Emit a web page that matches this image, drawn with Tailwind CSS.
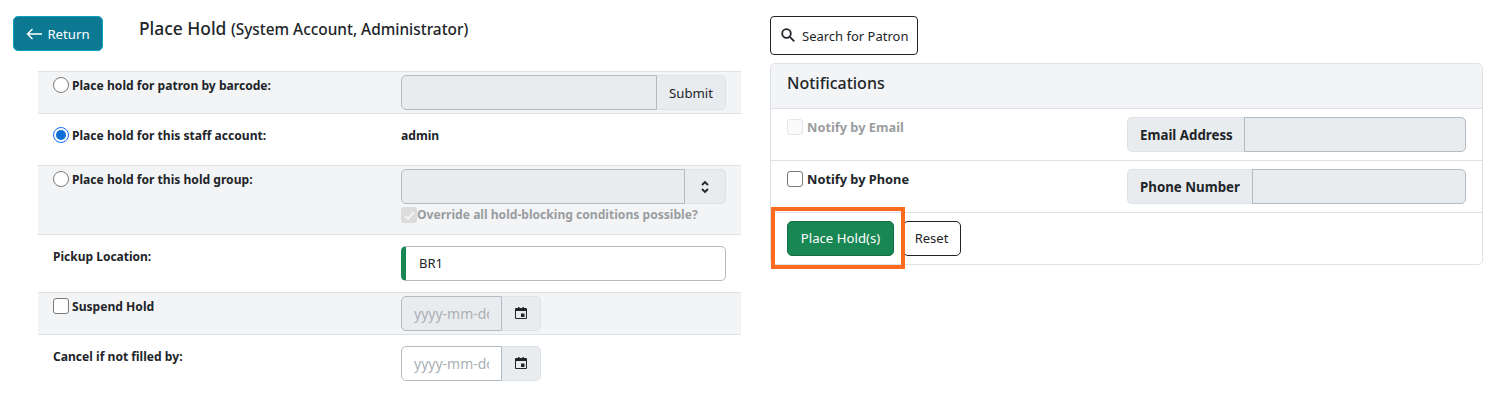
<!DOCTYPE html>
<html lang="en">
  <head>
    <meta charset="UTF-8" />
    <title>Place Hold</title>
    <script src="https://cdn.jsdelivr.net/npm/@tailwindcss/browser@4"></script>
  </head>
  <body class="bg-white h-[409px] overflow-hidden font-['Noto_Sans','Open_Sans',sans-serif] text-[13px] text-[#212529]">
    <div class="flex">
      <!-- left column -->
      <div class="w-[770px] shrink-0">
        <div class="flex pl-[13px] pt-[16px] h-[71px]">
          <a class="w-[90px] h-[35px] pt-[2px] flex items-center justify-center gap-[5px] rounded-[5px] bg-[#0c7891] border border-[#0aa2c0] text-white text-[13.2px]">
            <svg class="w-[16px] h-[16px] -mt-[2px]" viewBox="0 0 16 16" fill="none" stroke="currentColor" stroke-width="1.4"><path d="M16 8H1.500M6.500 3l-5 5 5 5" /></svg>
            Return
          </a>
          <h1 class="ml-[36px] -mt-[1px] text-[17.4px] leading-[26px] font-medium">Place Hold <span class="text-[15.4px]">(System Account, Administrator)</span></h1>
        </div>

        <div class="ml-[38px] w-[703px] border-t border-[#dee2e6]">
          <div class="h-[42px] bg-[#f3f4f6] border-b border-[#dee2e6] flex pl-[15px]">
            <label class="w-[348px] flex items-start pt-[5px] font-bold text-[12.1px] leading-[18px]">
              <span class="w-[16px] h-[16px] mr-[3px] rounded-full border border-[#7a7a7a] bg-white shrink-0"></span>
              Place hold for patron by barcode:
            </label>
            <div class="w-[325px] h-[35px] mt-[3px] flex">
              <div class="flex-1 bg-[#e9ecef] border border-[#b3bac1] rounded-l-[5px]"></div>
              <div class="w-[69px] pt-[2px] bg-[#e9ecef] border border-l-0 border-[#dee2e6] rounded-r-[5px] flex items-center justify-center text-[13.2px]">Submit</div>
            </div>
          </div>

          <div class="h-[52px] border-b border-[#dee2e6] flex pl-[15px]">
            <label class="w-[348px] flex items-start pt-[13px] font-bold text-[12.1px] leading-[18px]">
              <span class="w-[16px] h-[16px] mr-[3px] rounded-full border border-[#0d6efd] bg-white shrink-0 flex items-center justify-center">
                <span class="w-[10px] h-[10px] rounded-full bg-[#0b6fd6]"></span>
              </span>
              Place hold for this staff account:
            </label>
            <div class="pt-[13px] font-bold text-[12.1px] leading-[18px]">admin</div>
          </div>

          <div class="h-[69px] bg-[#f3f4f6] border-b border-[#dee2e6] flex pl-[15px]">
            <label class="w-[348px] flex items-start pt-[5px] font-bold text-[12.1px] leading-[18px]">
              <span class="w-[16px] h-[16px] mr-[3px] rounded-full border border-[#7a7a7a] bg-white shrink-0"></span>
              Place hold for this hold group:
            </label>
            <div class="w-[325px]">
              <div class="h-[35px] mt-[3px] flex">
                <div class="flex-1 bg-[#e9ecef] border border-[#b3bac1] rounded-l-[5px]"></div>
                <div class="w-[41px] bg-[#e9ecef] border border-l-0 border-[#dee2e6] rounded-r-[5px] flex items-center justify-center">
                  <svg class="w-[10px] h-[14px]" viewBox="0 0 10 14" fill="none" stroke="#212529" stroke-width="1.8"><path d="M2 5 5 2l3 3M2 9l3 3 3-3" /></svg>
                </div>
              </div>
              <div class="flex items-center mt-[2px] font-bold text-[12.1px] leading-[18px] text-[#9a9da0]">
                <span class="w-[16px] h-[16px] rounded-[3px] bg-[#dcdcdc] flex items-center justify-center shrink-0">
                  <svg class="w-[13px] h-[13px]" viewBox="0 0 13 13" fill="none" stroke="#f3f4f6" stroke-width="2"><path d="M2 7l3 3 6-7" /></svg>
                </span>
                Override all hold-blocking conditions possible?
              </div>
            </div>
          </div>

          <div class="h-[58px] border-b border-[#dee2e6] flex pl-[15px]">
            <div class="w-[348px] pt-[13px] font-bold text-[12px] leading-[18px]">Pickup Location:</div>
            <div class="w-[325px] h-[35px] mt-[11px] flex items-center rounded-[5px] border border-[#b3bac1] border-l-[5px] border-l-[#198754] pl-[13px] text-[13px]">BR1</div>
          </div>

          <div class="h-[42px] bg-[#f3f4f6] border-b border-[#dee2e6] flex pl-[15px]">
            <label class="w-[348px] flex items-start pt-[5px] font-bold text-[12.1px] leading-[18px]">
              <span class="w-[16px] h-[16px] mr-[3px] rounded-[3px] border border-[#7a7a7a] bg-white shrink-0"></span>
              Suspend Hold
            </label>
            <div class="h-[35px] mt-[3px] flex">
              <input disabled placeholder="yyyy-mm-dd" class="w-[101px] bg-[#e9ecef] border border-[#b3bac1] rounded-l-[5px] px-[12px] text-[14px] placeholder:text-[#a9afb5]" />
              <div class="w-[39px] pb-[2px] bg-[#e9ecef] border border-l-0 border-[#dee2e6] rounded-r-[5px] flex items-center justify-center">
                <svg class="w-[12px] h-[12px]" viewBox="0 0 12 12"><path fill="#212529" fill-rule="evenodd" d="M1 1h2V0h1.500v1h3V0H9v1h2a1 1 0 0 1 1 1v9a1 1 0 0 1-1 1H1a1 1 0 0 1-1-1V2a1 1 0 0 1 1-1Zm0 3v7h10V4Zm5 2.500h3.500V10H6Z" /></svg>
              </div>
            </div>
          </div>

          <div class="h-[58px] flex pl-[15px]">
            <div class="w-[348px] pt-[13px] font-bold text-[12.1px] leading-[18px]">Cancel if not filled by:</div>
            <div class="h-[35px] mt-[11px] flex">
              <input placeholder="yyyy-mm-dd" class="w-[101px] bg-white border border-[#b3bac1] rounded-l-[5px] px-[12px] text-[14px] placeholder:text-[#a9afb5]" />
              <div class="w-[39px] pb-[2px] bg-[#e9ecef] border border-l-0 border-[#dee2e6] rounded-r-[5px] flex items-center justify-center">
                <svg class="w-[12px] h-[12px]" viewBox="0 0 12 12"><path fill="#212529" fill-rule="evenodd" d="M1 1h2V0h1.500v1h3V0H9v1h2a1 1 0 0 1 1 1v9a1 1 0 0 1-1 1H1a1 1 0 0 1-1-1V2a1 1 0 0 1 1-1Zm0 3v7h10V4Zm5 2.500h3.500V10H6Z" /></svg>
              </div>
            </div>
          </div>
        </div>
      </div>

      <!-- right column -->
      <div class="w-[713px] pt-[16px]">
        <a class="w-[148px] h-[39px] pt-[2px] flex items-center pl-[10px] gap-[7px] rounded-[4px] border border-[#212529] text-[13px]">
          <svg class="w-[14px] h-[14px] -mt-[4px]" viewBox="0 0 14 14" fill="none" stroke="#212529" stroke-width="1.800"><circle cx="5.500" cy="5.500" r="4.300" /><path d="m8.800 8.800 4.500 4.500" /></svg>
          Search for Patron
        </a>

        <div class="relative mt-[8px] w-[713px] h-[202px] border border-[#dee2e6] rounded-[5px]">
          <div class="h-[45px] pb-[6px] bg-[#f3f4f6] border-b border-[#dee2e6] rounded-t-[5px] flex items-center pl-[16px] text-[16px] font-medium">Notifications</div>

          <div class="h-[52px] border-b border-[#dee2e6] flex pl-[16px] pr-[16px]">
            <label class="w-[340px] flex items-start pt-[9px] font-bold text-[12.800px] leading-[18px] text-[#9a9da0]">
              <span class="w-[16px] h-[16px] mt-[1px] mr-[4px] rounded-[3px] border border-[#e6e6e6] bg-[#fafafa] shrink-0"></span>
              Notify by Email
            </label>
            <div class="flex-1 h-[35px] mt-[8px] flex">
              <div class="w-[117px] pt-[2px] bg-[#e9ecef] border border-r-0 border-[#dee2e6] rounded-l-[5px] flex items-center pl-[12px] font-bold text-[13.300px]">Email Address</div>
              <div class="flex-1 bg-[#e9ecef] border border-[#b3bac1] rounded-r-[5px]"></div>
            </div>
          </div>

          <div class="h-[52px] border-b border-[#dee2e6] flex pl-[16px] pr-[16px]">
            <label class="w-[340px] flex items-start pt-[9px] font-bold text-[12.800px] leading-[18px]">
              <span class="w-[16px] h-[16px] mt-[1px] mr-[4px] rounded-[3px] border border-[#7a7a7a] bg-white shrink-0"></span>
              Notify by Phone
            </label>
            <div class="flex-1 h-[35px] mt-[8px] flex">
              <div class="w-[125px] pt-[2px] bg-[#e9ecef] border border-r-0 border-[#dee2e6] rounded-l-[5px] flex items-center pl-[12px] font-bold text-[13.300px]">Phone Number</div>
              <div class="flex-1 bg-[#e9ecef] border border-[#b3bac1] rounded-r-[5px]"></div>
            </div>
          </div>

          <div class="flex pl-[16px] pt-[8px] gap-[9px]">
            <button class="w-[107px] h-[35px] pt-[1px] rounded-[5px] bg-[#198754] border border-[#146c43] text-white text-[13.200px]">Place Hold(s)</button>
            <button class="w-[58px] h-[35px] pt-[1px] pr-[1px] rounded-[5px] border border-[#212529]">Reset</button>
          </div>

          <!-- highlight drawn over the screenshot -->
          <div class="absolute left-[0px] top-[143px] w-[134px] h-[62px] border-[4px] border-[#ff6a1f]"></div>
        </div>
      </div>
    </div>
  </body>
</html>
